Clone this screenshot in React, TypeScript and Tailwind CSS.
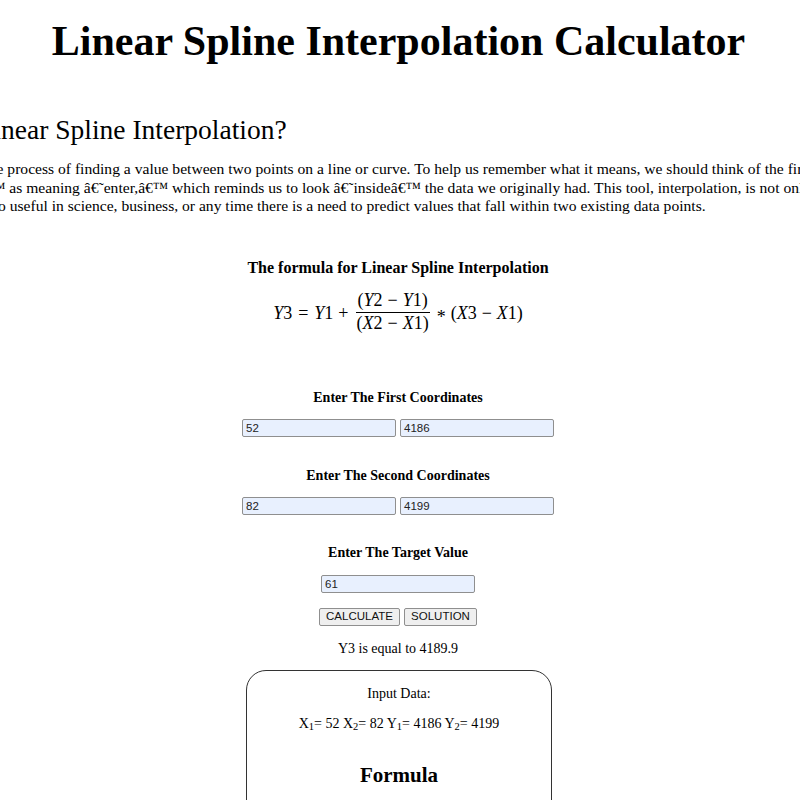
import React from "react";

function Inp({ v, w = "w-[154px]" }: { v: string; w?: string }) {
  return (
    <div
      className={`${w} h-[18px] border border-[#8f8f8f] rounded-[2px] bg-[#e8f0fe] font-['Liberation_Sans'] text-[11.5px] leading-[16px] text-[#222] px-[3px] flex items-center`}
    >
      {v}
    </div>
  );
}

function Label({ children, cls }: { children: React.ReactNode; cls: string }) {
  return <div className={`text-[14px] leading-[16px] font-bold ${cls}`}>{children}</div>;
}

export default function App() {
  return (
    <div className="h-[800px] w-[800px] overflow-hidden bg-white text-black font-['Liberation_Serif',serif]">
      <div className="w-[797px]">
        <h1 className="text-center text-[42px] leading-[48px] font-bold pt-[17px]">
          Linear Spline Interpolation Calculator
        </h1>
      </div>

      <h2 className="mt-[49px] text-[27.5px] leading-[31px] whitespace-nowrap ml-[-115px]">
        What is Linear Spline Interpolation?
      </h2>

      <div className="mt-[15px] text-[15.6px] leading-[18.5px] whitespace-nowrap">
        <div className="ml-[-15.6px]">
          the process of finding a value between two points on a line or curve. To help us remember what it means, we should think of the first part of the word,
        </div>
        <div className="ml-[-24.6px]">
          â€™ as meaning â€˜enter,â€™ which reminds us to look â€˜insideâ€™ the data we originally had. This tool, interpolation, is not only useful in statistics, but is
        </div>
        <div className="ml-[-2px]">
          o useful in science, business, or any time there is a need to predict values that fall within two existing data points.
        </div>
      </div>

      <div className="w-[796px] flex flex-col items-center">
        <div className="mt-[43px] text-[16px] leading-[18px] font-bold">
          The formula for Linear Spline Interpolation
        </div>

        <div className="mt-[14px] flex items-center text-[18px] leading-[18px]">
          <span className="mt-[3px] whitespace-nowrap">
            <i>Y</i>3<span className="mx-[6px]">=</span>
            <i>Y</i>1<span className="ml-[5px]">+</span>
          </span>
          <span className="inline-flex flex-col items-center mx-[7px]">
            <span className="pb-[3px] px-[1px] whitespace-nowrap">
              (<i>Y</i>2<span className="mx-[5px]">−</span>
              <i>Y</i>1)
            </span>
            <span className="border-t border-black pt-[1px] px-[1px] whitespace-nowrap">
              (<i>X</i>2<span className="mx-[5px]">−</span>
              <i>X</i>1)
            </span>
          </span>
          <span className="mt-[3px] whitespace-nowrap">
            <span className="relative top-[4px]">*</span>
            <span className="ml-[5px]">(</span>
            <i>X</i>3<span className="mx-[5px]">−</span>
            <i>X</i>1)
          </span>
        </div>

        <Label cls="mt-[58px]">Enter The First Coordinates</Label>
        <div className="mt-[13px] flex gap-[4px]">
          <Inp v="52" />
          <Inp v="4186" />
        </div>

        <Label cls="mt-[31px]">Enter The Second Coordinates</Label>
        <div className="mt-[13px] flex gap-[4px]">
          <Inp v="82" />
          <Inp v="4199" />
        </div>

        <Label cls="mt-[30px]">Enter The Target Value</Label>
        <div className="mt-[14px]">
          <Inp v="61" />
        </div>

        <div className="mt-[15px] flex gap-[4px] font-['Liberation_Sans'] text-[11.5px] text-[#111]">
          <button className="w-[81px] h-[18px] border border-[#8f8f8f] rounded-[2px] bg-[#efefef] flex items-center justify-center">
            CALCULATE
          </button>
          <button className="w-[73px] h-[18px] border border-[#8f8f8f] rounded-[2px] bg-[#efefef] flex items-center justify-center">
            SOLUTION
          </button>
        </div>

        <div className="mt-[15px] text-[14px] leading-[16px]">Y3 is equal to 4189.9</div>

        <div className="mt-[13px] ml-[2px] w-[306px] h-[300px] border border-[#333] rounded-[20px] flex flex-col items-center">
          <div className="mt-[15px] text-[14px] leading-[16px]">Input Data:</div>
          <div className="mt-[14px] text-[14px] leading-[16px]">
            X<sub>1</sub>= 52 X<sub>2</sub>= 82 Y<sub>1</sub>= 4186 Y<sub>2</sub>= 4199
          </div>
          <div className="mt-[31px] text-[21px] leading-[24px] font-bold">Formula</div>
          <div className="mt-[20px] text-[14px] leading-[16px]">Y3 = Y1 + (Y2 − Y1)/(X2 − X1) ∗ (X3 − X1)</div>
        </div>
      </div>
    </div>
  );
}
